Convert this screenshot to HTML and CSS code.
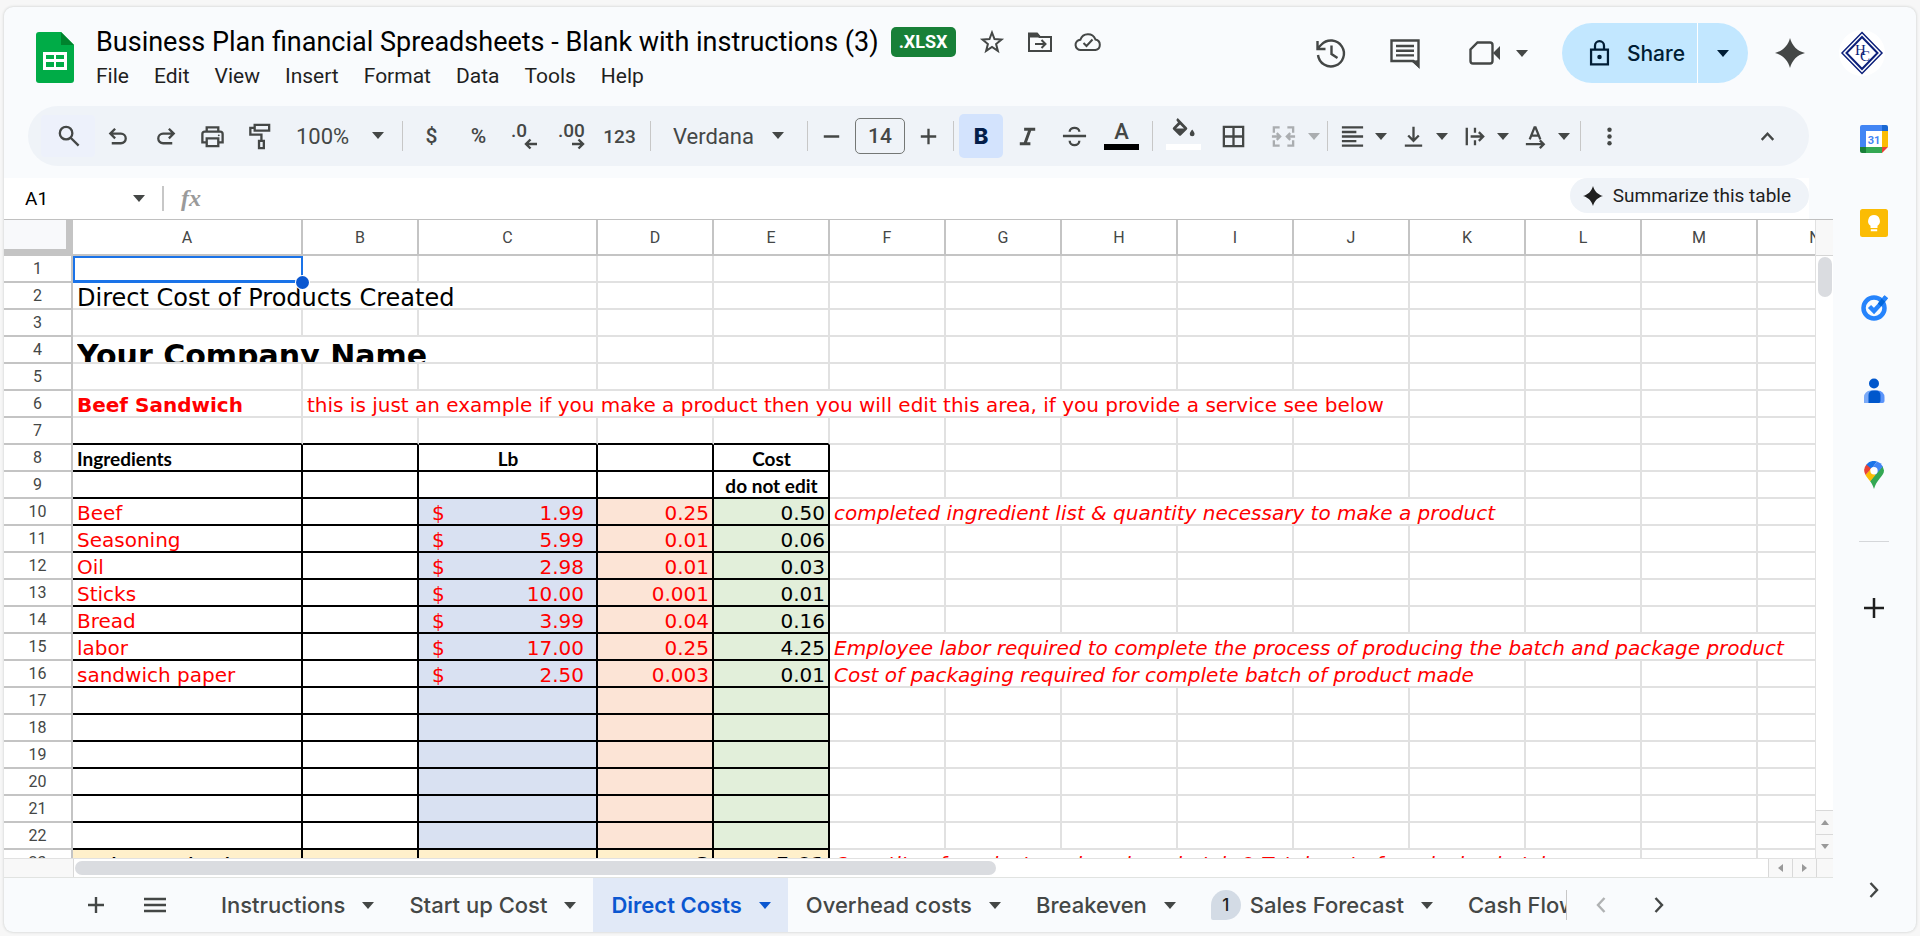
FILE: index.html
```html
<!DOCTYPE html>
<html lang="en">
<head>
<meta charset="utf-8">
<title>Business Plan financial Spreadsheets</title>
<link rel="stylesheet" href="styles.css">
</head>
<body>
<svg class="defs" aria-hidden="true">
  <symbol id="caret" viewBox="0 0 12 7"><path d="M0 0h12L6 7z"/></symbol>
  <symbol id="spark" viewBox="0 0 24 24"><path d="M12 0c1.600 6.200 5.800 10.400 12 12-6.200 1.600-10.400 5.800-12 12-1.600-6.200-5.800-10.400-12-12C6.200 10.400 10.400 6.200 12 0z"/></symbol>
</svg>
<div class="app">
  <header class="top">
    <svg class="logo" viewBox="0 0 38 51"><path fill="#00ac47" d="M3 0h22l13 13v35a3 3 0 0 1-3 3H3a3 3 0 0 1-3-3V3a3 3 0 0 1 3-3z"/><path fill="#00832d" d="M25 0l13 13H25z"/><path fill="#fff" fill-rule="evenodd" d="M7 20h24v18H7zM10 23v4h8v-4zM20 23v4h8v-4zM10 30v5h8v-5zM20 30v5h8v-5z"/></svg>
    <div class="doc">
      <div class="title-row">
        <h1>Business Plan financial Spreadsheets - Blank with instructions (3)</h1>
        <span class="badge">.XLSX</span>
        <div class="doc-icons">
          <button aria-label="Star"><svg class="line" viewBox="0 0 28 28"><path d="M14 4.500l2.500 6.600 7 .4-5.400 4.500 1.800 6.900-5.900-3.900-5.900 3.900 1.800-6.900-5.400-4.500 7-.4z"/></svg></button>
          <button aria-label="Move"><svg class="line" viewBox="0 0 28 28"><path d="M3 6h8l2.500 3H25v14H3zM9 16h10M15.500 12l4 4-4 4"/><path d="M3 5.500h8l2.500 3H3z" fill="#444746"/></svg></button>
          <button aria-label="Cloud status"><svg class="line" viewBox="0 0 28 28"><path d="M7 22a5 5 0 0 1-.6-10.300 8 8 0 0 1 15-.3A5.400 5.400 0 0 1 21.500 22zM9.500 15l3 3 6-6.500"/></svg></button>
        </div>
      </div>
      <nav class="menu">
        <button>File</button><button>Edit</button><button>View</button><button>Insert</button><button>Format</button><button>Data</button><button>Tools</button><button>Help</button>
      </nav>
    </div>
    <div class="actions">
      <button class="act" aria-label="History"><svg class="line thick" viewBox="0 0 34 34"><path d="M4 19a13 13 0 1 0 3.500-10.500L4 12M3.500 5v8h8M17.500 9.500V18l6 4"/></svg></button>
      <button class="act chat" aria-label="Comments"><svg class="line thick" viewBox="0 0 34 34"><path d="M3.500 4.500h27V30l-5-5h-22z"/><path d="M31 24v8l-8-7z" fill="#444746" stroke="none"/><path d="M8 10h18M8 14.700h18M8 19.400h18"/></svg></button>
      <button class="act meet" aria-label="Meet"><svg class="line thick" viewBox="0 0 34 34"><path d="M9.500 6.500H22a2.500 2.500 0 0 1 2.500 2.500v16a2.500 2.500 0 0 1-2.500 2.500H5A2.500 2.500 0 0 1 2.500 25V13.500z"/><path d="M25 17l7-7v14z" fill="#444746" stroke="none"/></svg><svg class="caret"><use href="#caret"/></svg></button>
      <div class="share">
        <button class="share-main"><svg viewBox="0 0 24 24"><path fill="none" stroke="#001d35" stroke-width="2" d="M4.500 9h15v13h-15zM8 9V5.500a4 4 0 0 1 8 0V9"/><circle cx="12" cy="15.500" r="2" fill="#001d35"/></svg>Share</button>
        <button class="share-more" aria-label="Share options"><svg class="caret"><use href="#caret"/></svg></button>
      </div>
      <button class="act gemini" aria-label="Gemini"><svg viewBox="0 0 24 24"><use href="#spark"/></svg></button>
      <button class="avatar" aria-label="Account"><svg viewBox="0 0 46 46"><circle cx="23" cy="23" r="23" fill="#fff"/><path d="M23 2.500L43 23 23 43.500 3 23z" fill="none" stroke="#0b1f7a" stroke-width="1.500"/><path d="M23 7L38.500 23 23 39 7.500 23z" fill="none" stroke="#0b1f7a" stroke-width="2"/><text x="16" y="25" class="mono">H</text><text x="21" y="31" class="mono">C</text></svg></button>
    </div>
  </header>
  <div class="work">
    <main class="main">
      <div class="toolbar" role="toolbar">
        <button class="search" aria-label="Search menus"><svg class="line thick" viewBox="0 0 28 28"><circle cx="11.500" cy="10.500" r="6.500"/><path d="M16.500 15.500l8 8"/></svg></button>
        <button class="tool" aria-label="Undo"><svg class="line thick" viewBox="0 0 28 28"><path d="M7 21h9.500a5 5 0 0 0 0-10H6M10.500 6L5.500 11l5 5"/></svg></button>
        <button class="tool" aria-label="Redo"><svg class="line thick" viewBox="0 0 28 28"><path d="M21 21h-9.500a5 5 0 0 1 0-10H22M17.500 6l5 5-5 5"/></svg></button>
        <button class="tool" aria-label="Print"><svg class="line thick" viewBox="0 0 28 28"><path d="M8 9V4.500h12V9M8 20H3.500v-8.500a2.500 2.500 0 0 1 2.500-2.500h16a2.500 2.500 0 0 1 2.500 2.500V20H20M8 16h12v8H8z"/><circle cx="20.500" cy="12.800" r="1" fill="#444746" stroke="none"/></svg></button>
        <button class="tool" aria-label="Paint format"><svg class="line thick" viewBox="0 0 28 28"><path d="M9 2h15v6H9zM9 5H4.500v7H16v6M13.500 18.500h5v7.500h-5z"/></svg></button>
        <label class="drop zoom"><select aria-label="Zoom"><option>100%</option></select><svg class="caret"><use href="#caret"/></svg></label>
        <i class="sep"></i>
        <button class="tool sym">$</button>
        <button class="tool sym">%</button>
        <button class="tool" aria-label="Decrease decimal places"><svg class="dec" viewBox="0 -4 34 40"><text x="2" y="17">.0</text><path d="M28 24H17M21.500 19.500L17 24l4.500 4.500"/></svg></button>
        <button class="tool" aria-label="Increase decimal places"><svg class="dec" viewBox="0 -4 34 40"><text x="2" y="17">.00</text><path d="M16 24h11M22.500 19.500L27 24l-4.500 4.500"/></svg></button>
        <button class="tool sym small">123</button>
        <i class="sep"></i>
        <label class="drop font"><select aria-label="Font"><option>Verdana</option></select><svg class="caret"><use href="#caret"/></svg></label>
        <i class="sep"></i>
        <button class="step" aria-label="Decrease font size"><svg class="line thick" viewBox="0 0 28 28"><path d="M6 14h16"/></svg></button>
        <input class="size" aria-label="Font size" value="14">
        <button class="step" aria-label="Increase font size"><svg class="line thick" viewBox="0 0 28 28"><path d="M6 14h16M14 6v16"/></svg></button>
        <i class="sep"></i>
        <button class="tool bold" aria-pressed="true">B</button>
        <button class="tool" aria-label="Italic"><svg viewBox="0 0 28 28"><path d="M10.500 5H22v3h-4.200l-4.300 12H17v3H6v-3h4.200L14.500 8h-4z"/></svg></button>
        <button class="tool" aria-label="Strikethrough"><svg class="line thick" viewBox="0 0 28 28"><path d="M2 13.500h24M19 9a5 4 0 0 0-10 0M9 18.500a5 4.500 0 0 0 10 0"/></svg></button>
        <button class="tool color" aria-label="Text color">A</button>
        <i class="sep"></i>
        <button class="tool wide fill" aria-label="Fill color"><svg viewBox="0 0 28 28"><path fill-rule="evenodd" d="M8 1l9.500 9.800a1.500 1.500 0 0 1 0 2.100l-6 6a1.500 1.500 0 0 1-2.200 0l-6-6a1.500 1.500 0 0 1 0-2.100l5-5L6.500 3zM10.400 7.700L6.300 12h8.200zM23 13c1.500 2 2.500 3.200 2.500 4.500a2.500 2.500 0 0 1-5 0c0-1.300 1-2.500 2.500-4.500z"/></svg></button>
        <button class="tool wide" aria-label="Borders"><svg class="line thick" viewBox="0 0 28 28"><path d="M4 4h20v20H4zM14 4v20M4 14h20"/></svg></button>
        <button class="tool wide off" aria-label="Merge cells"><svg class="line thick" viewBox="0 0 28 28"><path d="M10 4.500H4V10M4 18v5.500h6M18 4.500h6V10M24 18v5.500h-6M2 14h8M7 10.500l3.500 3.500L7 17.500M26 14h-8M21 10.500L17.500 14l3.500 3.500"/></svg></button>
        <svg class="caret pale"><use href="#caret"/></svg>
        <i class="sep"></i>
        <button class="combo" aria-label="Horizontal align"><svg class="line thick" viewBox="0 0 28 28"><path d="M3 4.500h22M3 9.300h15M3 14h22M3 18.700h15M3 23.500h22"/></svg><svg class="caret"><use href="#caret"/></svg></button>
        <button class="combo" aria-label="Vertical align"><svg class="line thick" viewBox="0 0 28 28"><path d="M5 23.500h18M14 4v14M8.500 13l5.500 5.500 5.500-5.500"/></svg><svg class="caret"><use href="#caret"/></svg></button>
        <button class="combo" aria-label="Text wrapping"><svg class="line thick" viewBox="0 0 28 28"><path d="M6 5v18M14.500 5v5M14.500 18v5M10 14h12M18.500 9.500L23 14l-4.500 4.500"/></svg><svg class="caret"><use href="#caret"/></svg></button>
        <button class="combo" aria-label="Text rotation"><svg class="line thick" viewBox="0 0 28 28"><path d="M8 17L13 4.500h1L19 17M10 13h7M4 22h18M18.500 18l4 4-4 4"/></svg><svg class="caret"><use href="#caret"/></svg></button>
        <i class="sep tight"></i>
        <button class="tool" aria-label="More"><svg viewBox="0 0 28 28"><circle cx="14" cy="7" r="2.300"/><circle cx="14" cy="14" r="2.300"/><circle cx="14" cy="21" r="2.300"/></svg></button>
        <button class="tool hide" aria-label="Hide the menus"><svg class="line thick" viewBox="0 0 28 28"><path d="M8 17.500l6-6.500 6 6.500"/></svg></button>
      </div>
      <div class="formula">
        <label class="drop name"><select aria-label="Name box"><option>A1</option></select><svg class="caret"><use href="#caret"/></svg></label>
        <i class="sep"></i>
        <label class="fx" for="fx">fx</label>
        <input id="fx" class="fx-input">
        <button class="summary"><svg viewBox="0 0 24 24"><use href="#spark"/></svg>Summarize this table</button>
      </div>
      <section class="grid">
        <div class="sheet">
          <div class="cells">
            <table>
              <colgroup><col class="c-row"><col class="c-a"><col><col class="c-c"><col span="11"></colgroup>
              <thead><tr><th class="corner"><th>A<th>B<th>C<th>D<th>E<th>F<th>G<th>H<th>I<th>J<th>K<th>L<th>M<th>N</tr></thead>
              <tbody>
                <tr><th>1<td class="active"><i class="handle"></i><td><td><td><td><td><td><td><td><td><td><td><td><td></tr>
                <tr><th>2<td colspan="3"><span class="v mid">Direct Cost of Products Created</span><td><td><td><td><td><td><td><td><td><td><td></tr>
                <tr><th>3<td><td><td><td><td><td><td><td><td><td><td><td><td><td></tr>
                <tr><th>4<td colspan="3"><span class="v big">Your Company Name</span><td><td><td><td><td><td><td><td><td><td><td></tr>
                <tr><th>5<td><td><td><td><td><td><td><td><td><td><td><td><td><td></tr>
                <tr><th>6<td><span class="v red strong">Beef Sandwich</span><td colspan="9"><span class="v red">this is just an example if you make a product then you will edit this area, if you provide a service see below</span><td><td><td><td></tr>
                <tr class="above"><th>7<td><td><td><td><td><td><td><td><td><td><td><td><td><td></tr>
                <tr class="box"><th>8<td><span class="v lab">Ingredients</span><td><td><span class="v lab ctr">Lb</span><td><td><span class="v lab ctr">Cost</span><td><td><td><td><td><td><td><td><td></tr>
                <tr class="box"><th>9<td><td><td><td><td><span class="v lab ctr">do not edit</span><td><td><td><td><td><td><td><td><td></tr>
                <tr class="box calc"><th>10<td><span class="v">Beef</span><td><td><span class="v money"><b>$</b><b>1.99</b></span><td><span class="v">0.25</span><td><span class="v">0.50</span><td colspan="6"><span class="v note">completed ingredient list &amp; quantity necessary to make a product</span><td><td><td></tr>
                <tr class="box calc"><th>11<td><span class="v">Seasoning</span><td><td><span class="v money"><b>$</b><b>5.99</b></span><td><span class="v">0.01</span><td><span class="v">0.06</span><td><td><td><td><td><td><td><td><td></tr>
                <tr class="box calc"><th>12<td><span class="v">Oil</span><td><td><span class="v money"><b>$</b><b>2.98</b></span><td><span class="v">0.01</span><td><span class="v">0.03</span><td><td><td><td><td><td><td><td><td></tr>
                <tr class="box calc"><th>13<td><span class="v">Sticks</span><td><td><span class="v money"><b>$</b><b>10.00</b></span><td><span class="v">0.001</span><td><span class="v">0.01</span><td><td><td><td><td><td><td><td><td></tr>
                <tr class="box calc"><th>14<td><span class="v">Bread</span><td><td><span class="v money"><b>$</b><b>3.99</b></span><td><span class="v">0.04</span><td><span class="v">0.16</span><td><td><td><td><td><td><td><td><td></tr>
                <tr class="box calc"><th>15<td><span class="v">labor</span><td><td><span class="v money"><b>$</b><b>17.00</b></span><td><span class="v">0.25</span><td><span class="v">4.25</span><td colspan="9"><span class="v note">Employee labor required to complete the process of producing the batch and package product</span></tr>
                <tr class="box calc"><th>16<td><span class="v">sandwich paper</span><td><td><span class="v money"><b>$</b><b>2.50</b></span><td><span class="v">0.003</span><td><span class="v">0.01</span><td colspan="6"><span class="v note">Cost of packaging required for complete batch of product made</span><td><td><td></tr>
                <tr class="box calc"><th>17<td><td><td><td><td><td><td><td><td><td><td><td><td><td></tr>
                <tr class="box calc"><th>18<td><td><td><td><td><td><td><td><td><td><td><td><td><td></tr>
                <tr class="box calc"><th>19<td><td><td><td><td><td><td><td><td><td><td><td><td><td></tr>
                <tr class="box calc"><th>20<td><td><td><td><td><td><td><td><td><td><td><td><td><td></tr>
                <tr class="box calc"><th>21<td><td><td><td><td><td><td><td><td><td><td><td><td><td></tr>
                <tr class="box calc"><th>22<td><td><td><td><td><td><td><td><td><td><td><td><td><td></tr>
                <tr class="box total"><th>23<td><span class="v lab">products per batch</span><td><td><td><span class="v strong end">8</span><td><span class="v strong end">5.01</span><td colspan="7"><span class="v note">Quantity of product produced per batch &amp; Total cost of producing batch</span><td><td></tr>
              </tbody>
            </table>
          </div>
          <div class="vscroll">
            <div class="v-top"></div>
            <div class="v-track"><div class="v-thumb"></div></div>
            <button class="v-btn" aria-label="Scroll up"><svg viewBox="0 0 8 5"><path d="M0 5h8L4 0z"/></svg></button>
            <button class="v-btn" aria-label="Scroll down"><svg viewBox="0 0 8 5"><path d="M0 0h8L4 5z"/></svg></button>
          </div>
        </div>
        <div class="hscroll">
          <div class="h-corner"></div>
          <div class="h-track"><div class="h-thumb"></div></div>
          <button class="h-btn" aria-label="Scroll left"><svg viewBox="0 0 5 8"><path d="M5 0v8L0 4z"/></svg></button>
          <button class="h-btn" aria-label="Scroll right"><svg viewBox="0 0 5 8"><path d="M0 0v8l5-4z"/></svg></button>
          <div class="h-end"></div>
        </div>
      </section>
      <footer class="tabs">
        <button class="tab-icon" aria-label="Add sheet"><svg class="line thick" viewBox="0 0 28 28"><path d="M6 14h16M14 6v16"/></svg></button>
        <button class="tab-icon" aria-label="All sheets"><svg class="line thick" viewBox="0 0 28 28"><path d="M3 8h22M3 14h22M3 20h22"/></svg></button>
        <div class="strip">
          <button class="tab">Instructions<svg class="caret"><use href="#caret"/></svg></button>
          <button class="tab">Start up Cost<svg class="caret"><use href="#caret"/></svg></button>
          <button class="tab on">Direct Costs<svg class="caret"><use href="#caret"/></svg></button>
          <button class="tab">Overhead costs<svg class="caret"><use href="#caret"/></svg></button>
          <button class="tab">Breakeven<svg class="caret"><use href="#caret"/></svg></button>
          <button class="tab"><span class="count">1</span>Sales Forecast<svg class="caret"><use href="#caret"/></svg></button>
          <button class="tab">Cash Flow<svg class="caret"><use href="#caret"/></svg></button>
        </div>
        <div class="pager">
          <button class="off" aria-label="Scroll tabs left"><svg class="line thick" viewBox="0 0 28 28"><path d="M17.500 7l-6.500 7 6.500 7"/></svg></button>
          <button aria-label="Scroll tabs right"><svg class="line thick" viewBox="0 0 28 28"><path d="M10.500 7l6.500 7-6.500 7"/></svg></button>
        </div>
      </footer>
    </main>
    <aside class="side">
      <div class="addons">
        <button aria-label="Calendar"><svg viewBox="0 0 28 28"><path fill="#4285f4" d="M2 0h20v6H6v16H0V2a2 2 0 0 1 2-2z"/><path fill="#1967d2" d="M22 0h4a2 2 0 0 1 2 2v4h-6z"/><path fill="#fbbc04" d="M22 6h6v16h-6z"/><path fill="#34a853" d="M6 22h16v6H6z"/><path fill="#188038" d="M0 22h6v6H2a2 2 0 0 1-2-2z"/><path fill="#ea4335" d="M22 22h6l-6 6z"/><path fill="#fff" d="M6 6h16v16H6z"/><text x="14" y="19" class="cal">31</text></svg></button>
        <button aria-label="Keep"><svg viewBox="0 0 28 28"><rect width="28" height="28" rx="2.500" fill="#fbbc04"/><path fill="#fff" d="M14 6a6 6 0 0 0-3.500 10.800V19h7v-2.200A6 6 0 0 0 14 6zM10.800 20.300h6.400v2h-6.400z"/></svg></button>
        <button aria-label="Tasks"><svg viewBox="0 0 28 28"><circle cx="14" cy="15" r="10.500" fill="none" stroke="#2684fc" stroke-width="4.500"/><path d="M9.500 13.500l4.500 4.500 7-7.500" fill="none" stroke="#2684fc" stroke-width="4.500"/><path d="M19.500 12l6.500-8" stroke="#0066da" stroke-width="4.500" fill="none"/><path d="M23.500 7.200l2.900-3.600" stroke="#2684fc" stroke-width="4.500" fill="none"/></svg></button>
        <button aria-label="Contacts"><svg viewBox="0 0 28 28"><circle cx="14" cy="6.500" r="5" fill="#0057cc"/><path fill="#7baaf7" d="M4 26v-6a6.500 6.500 0 0 1 6.500-6.500H14V26z"/><path fill="#5b94fa" d="M24.500 24a2 2 0 0 1-2 2H14V13.500h4a6.500 6.500 0 0 1 6.500 6.500z"/><path fill="#0057cc" d="M8.500 26v-8a4.500 4.500 0 0 1 4.500-4.500h3a4.500 4.500 0 0 1 4.500 4.500v6a2 2 0 0 1-2 2z"/></svg></button>
        <button aria-label="Maps"><svg viewBox="0 0 28 28"><path fill="#34a853" d="M14 28c1.200-4.500 3.200-7 5.500-10.200 2.600-3.500 4.500-5 4.500-8.300L22.500 5 10 20c2 3 3.200 5 4 8z"/><path fill="#fbbc04" d="M5.500 14c1 2.200 3 4 4.700 6.300l7-8.300L10 8.500z"/><path fill="#ea4335" d="M6.400 3.500A9.500 9.500 0 0 0 5.500 14l8-9z"/><path fill="#1a73e8" d="M17 .5A10 10 0 0 0 6.400 3.500l5 4.500z"/><path fill="#4285f4" d="M17 .5a9.500 9.500 0 0 1 5.800 5L15.500 14 11 8.500z"/><circle cx="14" cy="9.800" r="3.700" fill="#fff"/></svg></button>
      </div>
      <hr class="rule">
      <button class="add" aria-label="Get add-ons"><svg viewBox="0 0 28 28"><path d="M4 14h20M14 4v20" stroke="#1f1f1f" stroke-width="2.500"/></svg></button>
      <button class="collapse" aria-label="Hide side panel"><svg class="line thick" viewBox="0 0 28 28"><path d="M10.500 7l6.500 7-6.500 7"/></svg></button>
    </aside>
  </div>
</div>
</body>
</html>
```
FILE: styles.css
```css
* { box-sizing: border-box; }
body { margin: 0; height: 100vh; padding: 7px 4px 4px; background: #f7f7f7; font-family: Roboto, "Liberation Sans", sans-serif; color: #444746; display: flex; }
button { border: 0; background: none; padding: 0; margin: 0; font: inherit; color: inherit; display: flex; align-items: center; justify-content: center; flex: none; }
svg { fill: #444746; flex: none; display: block; }
.defs { position: absolute; width: 0; height: 0; }
.line { fill: none; stroke: #444746; stroke-width: 2; }
.line.thick { stroke-width: 2.4; }
.caret { width: 12px; height: 7px; }
.app { flex: 1; min-width: 0; display: flex; flex-direction: column; background: #f9fbfd; border-radius: 9px; overflow: hidden; box-shadow: 0 0 3px #c4c7c5; }

.top { height: 99px; flex: none; display: flex; padding: 17px 31px 0 32px; }
.logo { width: 38px; height: 51px; margin: 8px 22px 0 0; }
.title-row { height: 36px; display: flex; align-items: center; }
h1 { margin: 0; font-size: 27px; font-weight: 400; color: #000; white-space: nowrap; line-height: 36px; }
.badge { margin-left: 12px; height: 30px; width: 65px; line-height: 30px; text-align: center; border-radius: 5px; background: #188038; color: #fff; font-size: 18px; font-weight: 700; }
.doc-icons { display: flex; gap: 20px; margin-left: 22px; }
.doc-icons svg { width: 28px; height: 28px; }
.menu { display: flex; gap: 25px; height: 32px; font-size: 21px; color: #1f1f1f; }
.actions { margin-left: auto; display: flex; align-items: center; height: 58px; }
.act svg { width: 34px; height: 34px; }
.act { margin-right: 40px; }
.act.chat { margin-right: 46px; }
.act.meet { gap: 14px; margin-right: 34px; }
.act .caret { width: 12px; height: 7px; }
.share { display: flex; height: 60px; border-radius: 30px; overflow: hidden; background: #fff; gap: 1px; color: #001d35; }
.share button { background: #c2e7ff; }
.share svg { fill: #001d35; }
.share-main { width: 135px; gap: 14px; font: 500 21px Inter, sans-serif; padding-left: 12px; }
.share-main svg { width: 27px; height: 30px; }
.share-more { width: 50px; }
.act.gemini { margin: 0 34px 0 27px; }
.act.gemini svg { width: 30px; height: 30px; }
.avatar svg { width: 46px; height: 46px; }
.mono { font: 15px "Liberation Serif", serif; fill: #0b1f7a; }

.work { flex: 1; min-height: 0; display: flex; }
.main { flex: 1; min-width: 0; display: flex; flex-direction: column; }
.toolbar { margin: 0 24px 12px; height: 60px; flex: none; border-radius: 30px; background: #eff3f8; padding: 0 22px 0 13px; display: flex; align-items: center; overflow: hidden; }
.toolbar svg.line, .tool svg { width: 27px; height: 27px; }
.search { width: 54px; height: 42px; background: #edf1fb; border-radius: 4px; }
.tool { width: 47px; height: 44px; }
.drop { position: relative; display: block; flex: none; }
.drop select { appearance: none; border: 0; background: none; width: 100%; height: 100%; font: inherit; color: inherit; padding: 0; }
.drop .caret { position: absolute; right: 18px; top: 50%; margin-top: -4px; }
.zoom { width: 119px; height: 42px; font-size: 22px; padding-left: 13px; }
.font { width: 144px; height: 42px; font-size: 22px; padding-left: 17px; }
.font .caret { right: 16px; }
.sep { flex: none; width: 1px; height: 30px; background: #c7c7c7; margin: 0 5px 0 7px; }
.zoom + .sep { margin-left: 0; }
.tight { margin: 0 5px 0 3px; }
.sym { font-size: 21px; font-weight: 500; }
.small { font-size: 19px; }
.tool .dec { width: 34px; height: 40px; }
.dec text { font: 500 19px Roboto, sans-serif; }
.dec path { fill: none; stroke: #444746; stroke-width: 2.4; }
.step { width: 36px; height: 42px; }
.size { width: 50px; height: 36px; margin: 0 5px 0 6px; padding: 0; border: 1px solid #747775; border-radius: 5px; background: none; text-align: center; font: 500 21px Roboto, sans-serif; color: #444746; }
.tool.bold { width: 44px; margin-right: 1px; background: #d3e3fd; border-radius: 5px; color: #041e49; font: 800 22px Inter, sans-serif; }
.color { flex-direction: column; justify-content: flex-end; font-size: 22px; line-height: 24px; font-weight: 500; padding-bottom: 8px; }
.color::after { content: ""; width: 35px; height: 6px; background: #000; flex: none; }
.tool.wide { width: 50px; }
.fill { flex-direction: column; justify-content: flex-end; padding-bottom: 8px; }
.fill::after { content: ""; width: 35px; height: 6px; background: #fff; flex: none; }
.off { opacity: .4; }
.pale { opacity: .4; }
.combo { width: 54px; height: 42px; margin-right: 7px; padding-left: 6px; justify-content: space-between; }
.hide { margin-left: auto; width: 40px; }

.formula { height: 41px; flex: none; margin-right: 24px; background: #fff; display: flex; align-items: center; }
.name { width: 154px; height: 34px; padding-left: 21px; font-size: 19px; color: #000; }
.name .caret { right: 13px; }
.formula .sep { height: 25px; margin: 0 17px 0 4px; width: 2px; }
.fx { font: italic 700 24px "Liberation Serif", serif; color: #9a9a9a; }
.fx-input { flex: 1; min-width: 0; height: 34px; border: 0; background: none; margin-left: 10px; }
.summary { align-self: flex-start; height: 35px; border-radius: 18px; padding: 0 18px 0 13px; gap: 10px; background: #eff3f8; color: #1f1f1f; font-size: 19px; }
.summary svg { width: 20px; height: 20px; fill: #1f1f1f; }

.grid { flex: 1; min-height: 0; display: flex; flex-direction: column; border-top: 1px solid #c0c0c0; }
.sheet { flex: 1; min-height: 0; display: flex; background: #fff; }
.cells { flex: 1; min-width: 0; overflow: hidden; }
table { table-layout: fixed; border-collapse: separate; border-spacing: 0; width: 1870px; font: 20px "DejaVu Sans", Verdana, sans-serif; color: #000; }
col { width: 116px; }
.c-row { width: 69px; }
.c-a { width: 230px; }
.c-c { width: 179px; }
th { padding: 0; font: 400 16px Roboto, sans-serif; color: #444746; border: 0 solid #c4c4c4; border-width: 0 2px 2px 0; line-height: 25px; height: 27px; }
thead th { height: 36px; }
thead .corner { background: #f8f9fb; border-width: 0 7px 7px 0; }
td { padding: 0 3px 0 4px; height: 27px; border: 0 solid #e1e1e1; border-width: 0 2px 2px 0; vertical-align: top; }
.v { display: block; height: 25px; line-height: 28px; overflow: hidden; white-space: nowrap; }
.mid { font-size: 24px; line-height: 30px; }
.big { font-size: 30px; font-weight: 700; line-height: 38px; }
.strong { font-weight: 700; }
.red { color: #f00; }
.note { color: #f00; font-style: italic; }
.lab { font: 700 19px Lato, sans-serif; line-height: 28px; }
.ctr { text-align: center; }
.end { text-align: right; }
.above td:nth-child(-n+6) { border-bottom-color: #000; }
.box td:nth-child(-n+6) { border-color: #000; }
.calc td:nth-child(-n+5) { color: #f00; }
.calc td:nth-child(4) { background: #d9e1f2; padding: 0 12px 0 13px; }
.calc td:nth-child(5) { background: #fce4d6; text-align: right; }
.calc td:nth-child(6) { background: #e2efda; text-align: right; }
.total td:nth-child(-n+6) { background: #fff0cb; }
.money { display: flex; justify-content: space-between; }
.money b { font-weight: 400; }
.active { position: relative; }
.active::before { content: ""; position: absolute; inset: 0 -2px -2px 0; border: 2px solid #1a73e8; border-bottom-width: 3px; }
.handle { position: absolute; right: -8px; bottom: -8px; width: 13px; height: 13px; border-radius: 50%; background: #0b57d0; box-shadow: 0 0 0 1px #fff; z-index: 1; }

.vscroll { width: 18px; flex: none; border-left: 1px solid #e1e1e1; display: flex; flex-direction: column; }
.v-top { height: 36px; background: #f8f8f8; border-bottom: 1px solid #d5d5d5; }
.v-track { flex: 1; padding: 1px 1px 0 2px; }
.v-thumb { height: 40px; border-radius: 7px; background: #dadce0; }
.v-btn { height: 24px; width: 100%; background: #f8f8f8; border-top: 1px solid #d9d9d9; }
.v-btn svg { width: 8px; height: 5px; fill: #999; }
.hscroll { height: 19px; flex: none; display: flex; border-top: 1px solid #e1e1e1; background: #fff; }
.h-corner { width: 70px; background: #f8f8f8; border-right: 1px solid #d9d9d9; }
.h-track { flex: 1; padding: 2px 0 0 1px; }
.h-thumb { width: 54.4%; height: 14px; border-radius: 7px; background: #dadce0; }
.h-btn { width: 24px; background: #f8f8f8; border-left: 1px solid #d9d9d9; }
.h-btn svg { width: 5px; height: 8px; fill: #999; }
.h-end { width: 17px; background: #f8f8f8; border-left: 1px solid #d9d9d9; }

.tabs { height: 55px; flex: none; border-top: 1px solid #e1e3e1; display: flex; align-items: stretch; padding-left: 62px; font: 500 22px Inter, sans-serif; }
.tab-icon { width: 59px; }
.tab-icon svg, .pager svg, .collapse svg { width: 28px; height: 28px; }
.strip { flex: 1; min-width: 0; display: flex; overflow: hidden; margin-left: 19px; }
.tab { padding: 0 17px 0 18px; gap: 17px; white-space: nowrap; }
.tab.on { background: #e1e9f7; color: #0b57d0; font-weight: 600; }
.on svg { fill: #0b57d0; }
.count { width: 30px; height: 30px; line-height: 30px; margin-right: -8px; border-radius: 15px 15px 15px 2px; background: #d3dbe5; color: #1f1f1f; font-size: 17px; }
.pager { width: 267px; flex: none; display: flex; align-items: center; padding-left: 21px; gap: 30px; position: relative; }
.pager::before { content: ""; position: absolute; left: 0; top: 12px; height: 30px; width: 1px; background: #c7c7c7; }

.side { width: 83px; flex: none; display: flex; flex-direction: column; align-items: center; padding: 19px 2px 28px 0; }
.addons { display: flex; flex-direction: column; gap: 56px; }
.side svg { width: 28px; height: 28px; }
.cal { font: 700 11px Roboto, sans-serif; fill: #4285f4; text-anchor: middle; }
.rule { width: 30px; border: 0; height: 1px; background: #d5d7da; margin: 52px 0; }
.collapse { margin-top: auto; }
```
